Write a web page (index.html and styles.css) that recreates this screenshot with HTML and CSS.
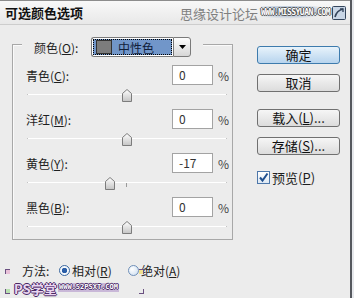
FILE: index.html
```html
<!DOCTYPE html>
<html lang="zh">
<head>
    <meta charset="UTF-8">
    <title>可选颜色选项</title>
    <link rel="stylesheet" href="styles.css">
</head>
<body>
    <div class="dialog">
        <!-- barra de título -->
        <div class="titlebar">
            <span class="title">可选颜色选项</span>
            <span class="wm-text">思缘设计论坛</span>
            <span class="wm-url">WWW.MISSYUAN.COM</span>
            <span class="wm-icon">
                <svg width="14" height="14" viewBox="0 0 14 14">
                    <rect x="0.5" y="0.5" width="13" height="13" rx="1" fill="#c9d6e6" stroke="#34455c"/>
                    <path d="M3 11 C4 7 7 4 11 3" fill="none" stroke="#34455c" stroke-width="1.6"/>
                    <path d="M8 3 L11 3 L11 6" fill="none" stroke="#34455c" stroke-width="1.4"/>
                </svg>
            </span>
        </div>

        <div class="content">
            <div class="left">
                <div class="group">
                    <div class="legend">
                        <span class="legend-label">颜色(<u>O</u>):</span>
                        <div class="select">
                            <div class="select-field">
                                <div class="select-value">
                                    <span class="swatch"></span>
                                    <span>中性色</span>
                                </div>
                            </div>
                            <div class="select-arrow">
                                <svg width="7" height="4" viewBox="0 0 7 4"><path d="M0 0 L7 0 L3.5 4 Z" fill="#000"/></svg>
                            </div>
                        </div>
                    </div>

                    <div class="channel">
                        <div class="field">
                            <span class="label">青色(<u>C</u>):</span>
                            <span class="input">0</span>
                            <span class="pct">%</span>
                        </div>
                        <div class="slider">
                            <div class="track"></div>
                            <svg class="thumb" style="left: 95px" width="10" height="13" viewBox="0 0 10 13"><path d="M0.5 4.5 L5 0.5 L9.5 4.5 L9.5 12.5 L0.5 12.5 Z" fill="url(#g)" stroke="#7c7c7c"/></svg>
                        </div>
                    </div>

                    <div class="channel">
                        <div class="field">
                            <span class="label">洋红(<u>M</u>):</span>
                            <span class="input">0</span>
                            <span class="pct">%</span>
                        </div>
                        <div class="slider">
                            <div class="track"></div>
                            <svg class="thumb" style="left: 95px" width="10" height="13" viewBox="0 0 10 13"><path d="M0.5 4.5 L5 0.5 L9.5 4.5 L9.5 12.5 L0.5 12.5 Z" fill="url(#g)" stroke="#7c7c7c"/></svg>
                        </div>
                    </div>

                    <div class="channel">
                        <div class="field">
                            <span class="label">黄色(<u>Y</u>):</span>
                            <span class="input">-17</span>
                            <span class="pct">%</span>
                        </div>
                        <div class="slider">
                            <div class="track"></div>
                            <span class="tick"></span>
                            <svg class="thumb" style="left: 78px" width="10" height="13" viewBox="0 0 10 13"><path d="M0.5 4.5 L5 0.5 L9.5 4.5 L9.5 12.5 L0.5 12.5 Z" fill="url(#g)" stroke="#7c7c7c"/></svg>
                        </div>
                    </div>

                    <div class="channel">
                        <div class="field">
                            <span class="label">黑色(<u>B</u>):</span>
                            <span class="input">0</span>
                            <span class="pct">%</span>
                        </div>
                        <div class="slider">
                            <div class="track"></div>
                            <svg class="thumb" style="left: 95px" width="10" height="13" viewBox="0 0 10 13"><path d="M0.5 4.5 L5 0.5 L9.5 4.5 L9.5 12.5 L0.5 12.5 Z" fill="url(#g)" stroke="#7c7c7c"/></svg>
                        </div>
                    </div>
                </div>

                <!-- método -->
                <div class="method">
                    <span class="method-label">方法:</span>
                    <span class="radio checked"></span>
                    <span class="radio-text">相对(<u>R</u>)</span>
                    <span class="radio"></span>
                    <span class="radio-text">绝对(<u>A</u>)</span>
                </div>
            </div>

            <div class="right">
                <div class="btn btn-default">确定</div>
                <div class="btn">取消</div>
                <div class="btn btn-gap">载入(<u>L</u>)...</div>
                <div class="btn">存储(<u>S</u>)...</div>
                <div class="check-row">
                    <span class="checkbox">
                        <svg width="11" height="11" viewBox="0 0 11 11"><path d="M2 5.5 L4.5 8.5 L9.5 1.5" fill="none" stroke="#1f4f8f" stroke-width="2"/></svg>
                    </span>
                    <span>预览(<u>P</u>)</span>
                </div>
            </div>
        </div>

        <!-- marca d'água -->
        <div class="footer-wm">
            <span class="corner c1"></span>
            <span class="corner c2"></span>
            <span class="corner c3"></span>
            <span class="corner c4"></span>
            <span class="ps">PS学堂</span>
            <span class="ps-url">WWW.52PSXT.COM</span>
        </div>
    </div>

    <svg width="0" height="0" class="defs">
        <defs>
            <linearGradient id="g" x1="0" y1="0" x2="0" y2="1">
                <stop offset="0" stop-color="#ffffff"/>
                <stop offset="1" stop-color="#c4c4c4"/>
            </linearGradient>
        </defs>
    </svg>
</body>
</html>
```

FILE: styles.css
```css
html, body {
    margin: 0;
    padding: 0;
    width: 354px;
    height: 298px;
    overflow: hidden;
}

body {
    font-family: "Noto Sans CJK SC", "DejaVu Sans", sans-serif;
    font-size: 12px;
    color: #1e1e1e;
    background: #e6e8ec;
}

.defs {
    position: absolute;
}

u {
    text-decoration: underline;
    text-underline-offset: 1px;
}

.dialog {
    position: relative;
    width: 350px;
    height: 298px;
    background: #ececec;
    border-right: 2px solid #55585e;
}

/* barra de título */
.titlebar {
    display: flex;
    align-items: center;
    box-sizing: border-box;
    height: 25px;
    border-top: 1px solid #8c8c8c;
    border-bottom: 1px solid #cdcdcd;
    background: linear-gradient(#f8f8f8, #e8e8e8);
    overflow: hidden;
}

.title {
    margin-left: 5px;
    font-size: 13px;
    font-weight: bold;
    color: #111;
    width: 175px;
}

.wm-text {
    font-size: 13px;
    color: #808080;
    margin-top: 2px;
}

.wm-url {
    margin-left: 3px;
    padding: 2px 0;
    font-family: "DejaVu Sans Mono", monospace;
    font-size: 8px;
    font-weight: bold;
    color: #fff;
    letter-spacing: -0.5px;
    text-shadow: 1px 0 #555, -1px 0 #555, 0 1px #555, 0 -1px #555;
    background: radial-gradient(ellipse at 40% 40%, rgba(80, 120, 170, 0.8), rgba(80, 120, 170, 0) 70%);
}

.wm-icon {
    display: flex;
    margin-left: 2px;
}

/* conteúdo */
.content {
    display: flex;
}

.left {
    margin-left: 12px;
    width: 221px;
}

.group {
    margin-top: 19px;
    border: 1px solid #a8a8a8;
    box-shadow: inset 1px 1px #fafafa;
}

.legend {
    display: flex;
    align-items: center;
    width: 163px;
    height: 20px;
    margin: -8px 0 0 9px;
    padding: 0 6px 0 12px;
    background: #ececec;
}

.legend-label {
    width: 57px;
}

.select {
    display: flex;
    height: 20px;
    width: 100px;
}

.select-field {
    width: 84px;
    padding: 1px;
    border: 1px solid #7a7a7a;
    border-right: none;
    border-radius: 3px 0 0 3px;
    background: #fff;
    box-sizing: border-box;
}

.select-value {
    display: flex;
    align-items: center;
    height: 100%;
    background: #7196c9;
    outline: 1px dotted #000;
    outline-offset: -1px;
    color: #10203a;
}

.swatch {
    width: 14px;
    height: 12px;
    margin: 0 6px 0 3px;
    background: #7c7c7c;
    border: 1px solid #333;
}

.select-arrow {
    display: flex;
    align-items: center;
    justify-content: center;
    width: 16px;
    border: 1px solid #7a7a7a;
    border-radius: 0 3px 3px 0;
    background: linear-gradient(#fdfdfd, #d6d6d6);
}

.channel {
    padding-left: 13px;
}

.legend + .channel {
    margin-top: 8px;
}

.field {
    display: flex;
    align-items: center;
    height: 20px;
    padding-right: 4px;
}

.label {
    flex: 1;
}

.input {
    width: 41px;
    height: 20px;
    box-sizing: border-box;
    padding-left: 6px;
    line-height: 18px;
    background: #fff;
    border: 1px solid #a3a3a3;
    color: #333;
}

.pct {
    width: 10px;
    margin-left: 5px;
    color: #444;
}

.slider {
    position: relative;
    height: 24px;
    width: 200px;
    margin-left: 1px;
}

.channel:last-child .slider {
    height: 22px;
}

.track {
    position: absolute;
    top: 9px;
    left: 0;
    width: 200px;
    height: 1px;
    background: #9a9a9a;
    border-bottom: 1px solid #fff;
    border-left: 1px solid #888;
    border-right: 1px solid #888;
    box-sizing: border-box;
}

.tick {
    position: absolute;
    left: 99px;
    top: 10px;
    width: 1px;
    height: 4px;
    background: #9a9a9a;
}

.thumb {
    position: absolute;
    top: 4px;
}

.method {
    display: flex;
    align-items: center;
    margin-top: 22px;
    padding-left: 10px;
    height: 16px;
    line-height: 13px;
    color: #222;
}

.method-label {
    width: 37px;
}

.radio {
    width: 11px;
    height: 11px;
    box-sizing: border-box;
    border-radius: 50%;
    border: 1px solid #6f8fb8;
    background: radial-gradient(circle at 35% 35%, #ffffff, #c9dbef);
    margin-right: 2px;
}

.radio.checked {
    border-color: #3a679f;
    background: radial-gradient(circle, #2b5ea8 0 2.5px, #f4f8fc 3px);
}

.radio-text {
    width: 56px;
}

/* botões */
.right {
    display: flex;
    flex-direction: column;
    margin-left: 24px;
    padding-top: 21px;
    width: 83px;
}

.btn {
    height: 18px;
    box-sizing: border-box;
    border: 1px solid #707070;
    border-radius: 3px;
    background: linear-gradient(#f6f6f6, #dcdcdc);
    text-align: center;
    font-size: 13px;
    line-height: 16px;
    margin-bottom: 10px;
    color: #111;
}

.btn-default {
    border-color: #3d7bad;
    background: linear-gradient(#e8f3fb, #b7d4ee);
}

.btn-gap {
    margin-top: 7px;
}

.check-row {
    display: flex;
    align-items: center;
    height: 13px;
    margin-top: 6px;
    font-size: 13px;
    line-height: 13px;
}

.checkbox {
    display: flex;
    align-items: center;
    justify-content: center;
    width: 13px;
    height: 13px;
    box-sizing: border-box;
    border: 1px solid #4d77aa;
    background: linear-gradient(#ffffff, #dde8f3);
    margin-right: 2px;
}

/* marca d'água inferior */
.footer-wm {
    position: absolute;
    left: 0;
    top: 268px;
    width: 145px;
    height: 28px;
}

.ps {
    position: absolute;
    left: 14px;
    top: 14px;
    font-size: 13px;
    line-height: 13px;
    font-weight: bold;
    color: #e9d6f0;
    text-shadow: 1px 0 #4a2a66, -1px 0 #4a2a66, 0 1px #4a2a66, 0 -1px #4a2a66;
}

.ps-url {
    position: absolute;
    left: 58px;
    top: 15px;
    padding: 0 1px;
    font-family: "DejaVu Sans Mono", monospace;
    font-size: 7px;
    line-height: 9px;
    font-weight: bold;
    color: #fff;
    background: #c9b8d8;
    text-shadow: 1px 0 #4a2a66, -1px 0 #4a2a66, 0 1px #4a2a66, 0 -1px #4a2a66;
}

.corner {
    position: absolute;
    width: 4px;
    height: 4px;
    border: 1px solid #6a5080;
}

.c1 { left: 5px; top: 1px; border-right: none; border-bottom: none; background: #e8c0d8; }
.c2 { left: 5px; top: 21px; border-right: none; border-top: none; background: #b8e0b0; }
.c3 { left: 139px; top: 1px; border-left: none; border-bottom: none; background: #f0e090; }
.c4 { left: 139px; top: 21px; border-left: none; border-top: none; }
```
